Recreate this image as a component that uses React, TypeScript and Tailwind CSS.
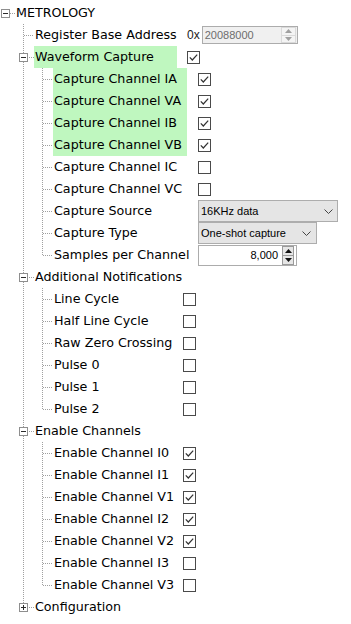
import React from 'react';

type Row = {
  label: string;
  d: number;
  last?: boolean;
  exp?: 'minus' | 'plus';
  cls: string;
  vcls?: string;
  value?: React.ReactNode;
};

const dash = { stroke: '#a0a0a0', strokeDasharray: '1 1', shapeRendering: 'crispEdges' as const };

function Gutter({ d, last, exp }: { d: number; last?: boolean; exp?: 'minus' | 'plus' }) {
  const w = 19 * d + 15;
  const els: React.ReactNode[] = [];
  for (let k = 1; k < d; k++) {
    els.push(<line key={'a' + k} x1={19 * k + 4.5} x2={19 * k + 4.5} y1={0} y2={22} {...dash} />);
  }
  let bx = 19 * d;
  if (d === 0) {
    bx = 1;
    els.push(<line key="h" x1={10} x2={15} y1={11.5} y2={11.5} {...dash} />);
  } else {
    const x = 19 * d + 4.5;
    if (exp) {
      els.push(<line key="t" x1={x} x2={x} y1={0} y2={7} {...dash} />);
      if (!last) els.push(<line key="b" x1={x} x2={x} y1={16} y2={22} {...dash} />);
      els.push(<line key="h" x1={19 * d + 10} x2={19 * d + 15} y1={11.5} y2={11.5} {...dash} />);
    } else {
      els.push(<line key="v" x1={x} x2={x} y1={0} y2={last ? 12 : 22} {...dash} />);
      els.push(<line key="h" x1={19 * d + 5} x2={19 * d + 15} y1={11.5} y2={11.5} {...dash} />);
    }
  }
  if (exp) {
    els.push(
      <rect key="box" x={bx + 0.5} y={7.5} width={8} height={8} fill="#fff" stroke="#8e8e8e" shapeRendering="crispEdges" />
    );
    els.push(<line key="m" x1={bx + 2} x2={bx + 7} y1={11.5} y2={11.5} stroke="#2b2b2b" shapeRendering="crispEdges" />);
    if (exp === 'plus')
      els.push(<line key="p" x1={bx + 4.5} x2={bx + 4.5} y1={9} y2={14} stroke="#2b2b2b" shapeRendering="crispEdges" />);
  }
  return (
    <svg width={w} height={22} className="shrink-0 block">
      {els}
    </svg>
  );
}

function Check({ on }: { on?: boolean }) {
  return (
    <svg width="13" height="13" viewBox="0 0 13 13" className="block mt-[1px]">
      <rect x="0.5" y="0.5" width="12" height="12" fill="#fff" stroke="#4a4a4a" shapeRendering="crispEdges" />
      {on && <path d="M2.8 6.4 L5.3 9 L10.2 3.6" stroke="#333" strokeWidth="1.2" fill="none" />}
    </svg>
  );
}

function Tri({ up, color }: { up?: boolean; color: string }) {
  return (
    <svg width="7" height="4" viewBox="0 0 7 4" className="block">
      {up ? <path d="M0 4 L3.5 0 L7 4 Z" fill={color} /> : <path d="M0 0 L3.5 4 L7 0 Z" fill={color} />}
    </svg>
  );
}

function RegisterField() {
  return (
    <div className="flex items-center h-[22px] font-['Liberation_Sans',Arial,sans-serif] text-[12px]">
      <span className="text-[#222] mr-[2px]">0x</span>
      <div className="flex items-center w-[96px] h-[18px] border border-[#acacac] bg-[#f0f0f0]">
        <span className="flex-1 pl-[2px] text-[11px] text-[#6d6d6d] leading-none">20088000</span>
        <div className="flex flex-col w-[15px] h-[16px] mr-[1px] gap-0">
          <div className="flex-1 flex items-center justify-center border border-[#dadada] bg-[#f4f4f4]">
            <Tri up color="#a0a0a0" />
          </div>
          <div className="flex-1 flex items-center justify-center border border-[#dadada] border-t-0 bg-[#f4f4f4]">
            <Tri color="#a0a0a0" />
          </div>
        </div>
      </div>
    </div>
  );
}

function Chevron() {
  return (
    <svg width="9" height="5" viewBox="0 0 9 5" className="block">
      <path d="M0.5 0.5 L4.5 4.5 L8.5 0.5" stroke="#444" fill="none" />
    </svg>
  );
}

function Select({ text, w }: { text: string; w: 'a' | 'b' }) {
  return (
    <div
      className={
        (w === 'a' ? 'w-[140px] pr-[4px]' : 'w-[119px] pr-[5px]') +
        " flex items-center justify-between h-[22px] border border-[#adadad] bg-[#e5e5e5] pl-[2px] font-['Liberation_Sans',Arial,sans-serif] text-[11px] text-black"
      }
    >
      <span>{text}</span>
      <Chevron />
    </div>
  );
}

function NumberField() {
  return (
    <div className="flex items-center w-[99px] h-[21px] border border-[#acacac] bg-white font-['Liberation_Sans',Arial,sans-serif] text-[11px] text-black">
      <span className="flex-1 text-right pr-[4px]">8,000</span>
      <div className="flex flex-col w-[12px] h-[19px] mr-[2px]">
        <div className="flex-1 flex items-center justify-center border border-[#9a9a9a] bg-[#e6e6e6]">
          <Tri up color="#111" />
        </div>
        <div className="flex-1 flex items-center justify-center border border-[#9a9a9a] border-t-0 bg-[#e6e6e6]">
          <Tri color="#111" />
        </div>
      </div>
    </div>
  );
}

const HL1 = 'w-[143px] bg-[#bff7bf]';
const HL2 = 'w-[134px] bg-[#bff7bf]';
const N1 = 'w-[153px]';
const N2 = 'w-[145px]';
const N3 = 'w-[130px]';

const rows: Row[] = [
  { label: 'METROLOGY', d: 0, exp: 'minus', cls: 'w-[200px]' },
  { label: 'Register Base Address', d: 1, cls: N1, value: <RegisterField /> },
  { label: 'Waveform Capture', d: 1, exp: 'minus', cls: HL1, vcls: 'ml-[10px]', value: <Check on /> },
  { label: 'Capture Channel IA', d: 2, cls: HL2, vcls: 'ml-[11px]', value: <Check on /> },
  { label: 'Capture Channel VA', d: 2, cls: HL2, vcls: 'ml-[11px]', value: <Check on /> },
  { label: 'Capture Channel IB', d: 2, cls: HL2, vcls: 'ml-[11px]', value: <Check on /> },
  { label: 'Capture Channel VB', d: 2, cls: HL2, vcls: 'ml-[11px]', value: <Check on /> },
  { label: 'Capture Channel IC', d: 2, cls: N2, value: <Check /> },
  { label: 'Capture Channel VC', d: 2, cls: N2, value: <Check /> },
  { label: 'Capture Source', d: 2, cls: N2, value: <Select text="16KHz data" w="a" /> },
  { label: 'Capture Type', d: 2, cls: N2, value: <Select text="One-shot capture" w="b" /> },
  { label: 'Samples per Channel', d: 2, last: true, cls: N2, value: <NumberField /> },
  { label: 'Additional Notifications', d: 1, exp: 'minus', cls: 'w-[200px]' },
  { label: 'Line Cycle', d: 2, cls: N3, value: <Check /> },
  { label: 'Half Line Cycle', d: 2, cls: N3, value: <Check /> },
  { label: 'Raw Zero Crossing', d: 2, cls: N3, value: <Check /> },
  { label: 'Pulse 0', d: 2, cls: N3, value: <Check /> },
  { label: 'Pulse 1', d: 2, cls: N3, value: <Check /> },
  { label: 'Pulse 2', d: 2, last: true, cls: N3, value: <Check /> },
  { label: 'Enable Channels', d: 1, exp: 'minus', cls: 'w-[200px]' },
  { label: 'Enable Channel I0', d: 2, cls: N3, value: <Check on /> },
  { label: 'Enable Channel I1', d: 2, cls: N3, value: <Check on /> },
  { label: 'Enable Channel V1', d: 2, cls: N3, value: <Check on /> },
  { label: 'Enable Channel I2', d: 2, cls: N3, value: <Check on /> },
  { label: 'Enable Channel V2', d: 2, cls: N3, value: <Check on /> },
  { label: 'Enable Channel I3', d: 2, cls: N3, value: <Check /> },
  { label: 'Enable Channel V3', d: 2, last: true, cls: N3, value: <Check /> },
  { label: 'Configuration', d: 1, last: true, exp: 'plus', cls: 'w-[200px]' },
];

export default function App() {
  return (
    <div className="w-[351px] h-[624px] bg-white pt-[2px] overflow-hidden font-['DejaVu_Sans',Verdana,sans-serif] text-[12.7px] text-black">
      {rows.map((r, i) => (
        <div key={i} className="flex items-center h-[22px]">
          <Gutter d={r.d} last={r.last} exp={r.exp} />
          <div className={r.cls + ' h-[22px] shrink-0 flex items-center pl-[1px] whitespace-nowrap'}>{r.label}</div>
          {r.value && <div className={(r.vcls ?? '') + ' flex items-center'}>{r.value}</div>}
        </div>
      ))}
    </div>
  );
}
